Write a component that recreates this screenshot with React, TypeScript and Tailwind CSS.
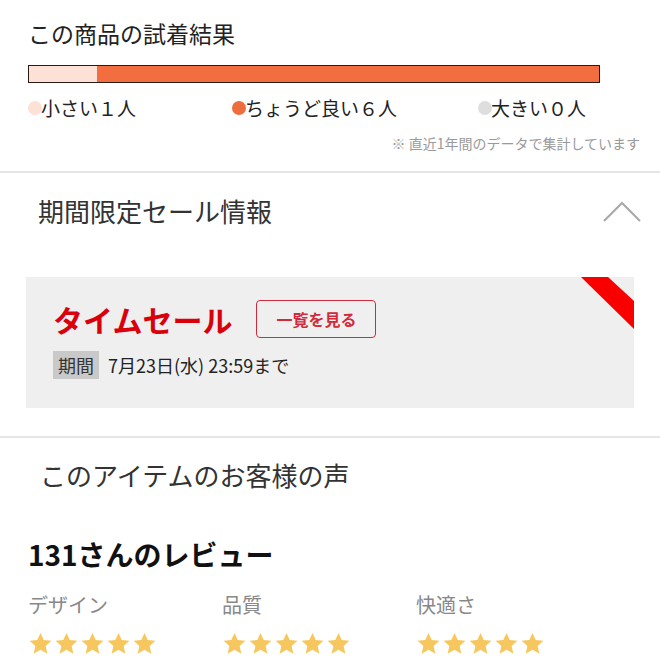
import React from 'react';

const font = { fontFamily: '"Noto Sans CJK JP", "Noto Sans", sans-serif' };

function Star() {
  return (
    <svg viewBox="0 0 24 24" className="w-[25px] h-[25px]" fill="#f6c75e">
      <path d="M12 1.8l3.1 6.9 7.4.7-5.6 5 1.7 7.4L12 17.9l-6.6 3.9 1.7-7.4-5.6-5 7.4-.7z" />
    </svg>
  );
}

function Stars() {
  return (
    <div className="flex gap-[1px]">
      {[0, 1, 2, 3, 4].map((i) => (
        <Star key={i} />
      ))}
    </div>
  );
}

export default function App() {
  const legend = [
    { label: '小さい１人', color: 'bg-[#fde0d6]', w: 'w-[204px]' },
    { label: 'ちょうど良い６人', color: 'bg-[#ed6d3d]', w: 'w-[246px]' },
    { label: '大きい０人', color: 'bg-[#dedede]', w: '' },
  ];

  return (
    <div className="w-[660px] h-[660px] overflow-hidden bg-white text-[#222]" style={font}>
      {/* 試着結果 */}
      <section className="px-[28px] pt-[17px] pb-[18px]">
        <h2 className="text-[23px] leading-[32px] text-[#222]">この商品の試着結果</h2>
        <div className="mt-[16px] w-[572px] h-[18px] border-[1.5px] border-[#2a1a14] flex">
          <div className="w-[68px] bg-[#fde0d6]" />
          <div className="flex-1 bg-[#f26d40]" />
        </div>
        <div className="mt-[12px] flex items-center">
          {legend.map((l) => (
            <div key={l.label} className={`flex items-center ${l.w}`}>
              <span className={`w-[14px] h-[14px] rounded-full ${l.color}`} />
              <span className="ml-[-1px] text-[19px] leading-[26px] text-[#222]">{l.label}</span>
            </div>
          ))}
        </div>
        <p className="mt-[12px] text-right mr-[-8px] text-[14px] leading-[20px] text-[#9a9a9a]">
          ※ 直近1年間のデータで集計しています
        </p>
      </section>

      <div className="h-[2px] bg-[#e6e6e6]" />

      {/* 期間限定セール情報 */}
      <section className="pt-[21px] pb-[28px]">
        <div className="flex items-center justify-between pl-[38px] pr-[19px]">
          <h2 className="text-[26px] leading-[34px] text-[#333]">期間限定セール情報</h2>
          <svg viewBox="0 0 38 24" className="w-[38px] h-[24px]" fill="none" stroke="#a8a8a8" strokeWidth="2">
            <path d="M1 22L19 4l18 18" />
          </svg>
        </div>

        <div className="relative mt-[49px] mx-[26px] h-[131px] bg-[#efefef] overflow-hidden pl-[27px] pt-[22px]">
          <svg className="absolute top-0 right-0 w-[54px] h-[54px]" viewBox="0 0 54 54">
            <polygon points="1,0 28,0 54,24 54,52" fill="#f80000" />
          </svg>
          <div className="flex items-center">
            <span className="text-[30px] leading-[40px] font-bold text-[#d9000c]">タイムセール</span>
            <span className="ml-[24px] h-[38px] px-[19px] flex items-center border-[1.5px] border-[#d22a3a] rounded-[4px] text-[16px] font-bold text-[#d22a3a]">
              一覧を見る
            </span>
          </div>
          <div className="mt-[12px] flex items-center">
            <span className="h-[28px] w-[46px] flex items-center justify-center bg-[#c9c9c9] text-[18px] text-[#333]">
              期間
            </span>
            <span className="ml-[9px] text-[18px] text-[#222]">7月23日(水) 23:59まで</span>
          </div>
        </div>
      </section>

      <div className="h-[2px] bg-[#e6e6e6]" />

      {/* お客様の声 */}
      <section className="pt-[19px] px-[28px]">
        <h2 className="pl-[12px] text-[26px] leading-[36px] text-[#333]">このアイテムのお客様の声</h2>
        <h3 className="mt-[42px] text-[28px] leading-[38px] font-bold text-[#111]">131さんのレビュー</h3>
        <div className="mt-[18px] flex">
          {['デザイン', '品質', '快適さ'].map((t) => (
            <div key={t} className="w-[194px]">
              <div className="text-[20px] leading-[28px] text-[#888]">{t}</div>
              <div className="mt-[12px]">
                <Stars />
              </div>
            </div>
          ))}
        </div>
      </section>
    </div>
  );
}
